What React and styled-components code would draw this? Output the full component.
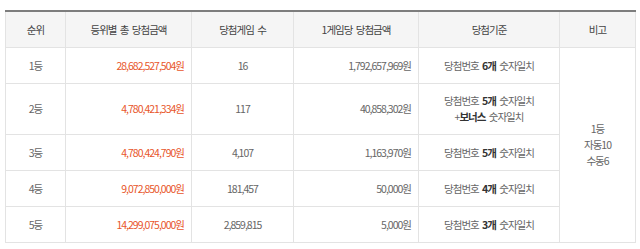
import React from "react";
import styled, { createGlobalStyle } from "styled-components";

const Global = createGlobalStyle`
  html, body { margin: 0; padding: 0; background: #fff; }
  body { font-family: "Noto Sans CJK KR", "Noto Sans", sans-serif; }
`;

const Wrap = styled.div`
  padding: 10px 5px 0 5px;
`;

const Table = styled.table`
  width: 630px;
  border-collapse: collapse;
  table-layout: fixed;
  border-top: 2px solid #7d7d7d;
  font-size: 10.5px;
  letter-spacing: -1px;
  word-spacing: 2px;
  color: #666;
`;

const HeadCell = styled.th`
  height: 35px;
  padding: 0;
  background: #f5f5f5;
  border: 1px solid #e3e3e3;
  border-top: none;
  font-weight: normal;
  color: #444;
  text-align: center;
  vertical-align: middle;
`;

const Cell = styled.td`
  height: ${(p) => (p.$tall ? "50px" : "35px")};
  padding: 0 7px;
  border: 1px solid #e3e3e3;
  line-height: 16px;
  text-align: ${(p) => p.$align || "center"};
  vertical-align: middle;
  color: ${(p) => (p.$accent ? "#e8562b" : "#666")};
`;

const Strong = styled.b`
  color: #333;
  font-weight: bold;
`;

const cols = [60, 126, 102, 125, 141, 76];

const rows = [
  {
    rank: "1등",
    total: "28,682,527,504원",
    count: "16",
    per: "1,792,657,969원",
    cond: [["당첨번호 ", "6개", " 숫자일치"]],
  },
  {
    rank: "2등",
    total: "4,780,421,334원",
    count: "117",
    per: "40,858,302원",
    cond: [
      ["당첨번호 ", "5개", " 숫자일치"],
      ["+", "보너스", " 숫자일치"],
    ],
  },
  {
    rank: "3등",
    total: "4,780,424,790원",
    count: "4,107",
    per: "1,163,970원",
    cond: [["당첨번호 ", "5개", " 숫자일치"]],
  },
  {
    rank: "4등",
    total: "9,072,850,000원",
    count: "181,457",
    per: "50,000원",
    cond: [["당첨번호 ", "4개", " 숫자일치"]],
  },
  {
    rank: "5등",
    total: "14,299,075,000원",
    count: "2,859,815",
    per: "5,000원",
    cond: [["당첨번호 ", "3개", " 숫자일치"]],
  },
];

export default function App() {
  return (
    <>
      <Global />
      <Wrap>
        <Table>
          <colgroup>
            {cols.map((w, i) => (
              <col key={i} style={{ width: w }} />
            ))}
          </colgroup>
          <thead>
            <tr>
              <HeadCell>순위</HeadCell>
              <HeadCell>등위별 총 당첨금액</HeadCell>
              <HeadCell>당첨게임 수</HeadCell>
              <HeadCell>1게임당 당첨금액</HeadCell>
              <HeadCell>당첨기준</HeadCell>
              <HeadCell>비고</HeadCell>
            </tr>
          </thead>
          <tbody>
            {rows.map((r, i) => (
              <tr key={r.rank}>
                <Cell $tall={r.cond.length > 1}>{r.rank}</Cell>
                <Cell $align="right" $accent>
                  {r.total}
                </Cell>
                <Cell>{r.count}</Cell>
                <Cell $align="right">{r.per}</Cell>
                <Cell>
                  {r.cond.map((c, j) => (
                    <React.Fragment key={j}>
                      {j > 0 && <br />}
                      {c[0]}
                      <Strong>{c[1]}</Strong>
                      {c[2]}
                    </React.Fragment>
                  ))}
                </Cell>
                {i === 0 && (
                  <Cell rowSpan={5}>
                    1등
                    <br />
                    자동10
                    <br />
                    수동6
                  </Cell>
                )}
              </tr>
            ))}
          </tbody>
        </Table>
      </Wrap>
    </>
  );
}
